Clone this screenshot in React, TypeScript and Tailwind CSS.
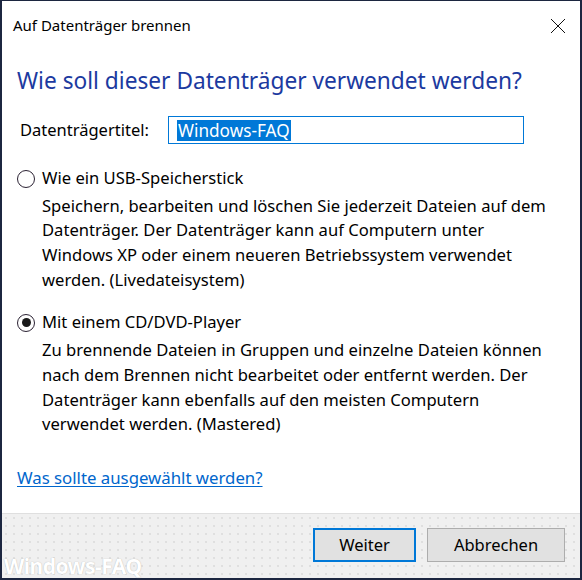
import { useState } from 'react';

const FONT = { fontFamily: '"Noto Sans", "Open Sans", Arial, sans-serif' };

function Radio({ checked }: { checked: boolean }) {
  return (
    <span className="mt-[4px] flex h-[18px] w-[18px] shrink-0 items-center justify-center rounded-full border border-[#2b2233] bg-white">
      {checked && <span className="h-[9px] w-[9px] rounded-full bg-[#1a1a1a]" />}
    </span>
  );
}

export default function App() {
  const [mode, setMode] = useState<'usb' | 'cd'>('cd');

  return (
    <div
      className="flex h-[580px] w-[582px] flex-col border-x-2 border-b-2 border-t border-[#1c2640] bg-white text-[#000000]"
      style={FONT}
    >
      <div className="flex h-[49px] items-center justify-between pl-[11px] pr-[14px]">
        <span className="text-[15px]">Auf Datenträger brennen</span>
        <svg width="16" height="16" viewBox="0 0 16 16" fill="none" stroke="#111" strokeWidth="1">
          <path d="M1 1 L15 15 M15 1 L1 15" />
        </svg>
      </div>

      <div className="flex flex-1 flex-col pl-[15px] pr-[10px]">
        <h1 className="mt-[17px] whitespace-nowrap text-[22.7px] leading-[28px] text-[#1c3aa0]">
          Wie soll dieser Datenträger verwendet werden?
        </h1>

        <div className="mt-[21px] flex items-center">
          <label className="w-[151px] pl-[3px] text-[16.5px]">Datenträgertitel:</label>
          <div className="flex h-[28px] w-[356px] items-center border border-[#0078d7] pl-[8px]">
            <span className="bg-[#0078d7] px-px text-[17.2px] leading-[21px] text-white">Windows-FAQ</span>
          </div>
        </div>

        <div className="mt-[22px] whitespace-nowrap text-[16.6px] leading-[24.7px]">
          <div className="flex cursor-default gap-[7px]" onClick={() => setMode('usb')}>
            <Radio checked={mode === 'usb'} />
            <div>
              <div>Wie ein USB-Speicherstick</div>
              <p className="mt-[3px]">
                Speichern, bearbeiten und löschen Sie jederzeit Dateien auf dem
                <br />
                Datenträger. Der Datenträger kann auf Computern unter
                <br />
                Windows XP oder einem neueren Betriebssystem verwendet
                <br />
                werden. (Livedateisystem)
              </p>
            </div>
          </div>

          <div className="mt-[17px] flex cursor-default gap-[7px]" onClick={() => setMode('cd')}>
            <Radio checked={mode === 'cd'} />
            <div>
              <div>Mit einem CD/DVD-Player</div>
              <p className="mt-[4px]">
                Zu brennende Dateien in Gruppen und einzelne Dateien können
                <br />
                nach dem Brennen nicht bearbeitet oder entfernt werden. Der
                <br />
                Datenträger kann ebenfalls auf den meisten Computern
                <br />
                verwendet werden. (Mastered)
              </p>
            </div>
          </div>
        </div>

        <a className="mt-[28px] w-fit text-[16.8px] text-[#0066cc] underline underline-offset-2" href="#">
          Was sollte ausgewählt werden?
        </a>
      </div>

      <div className="relative flex h-[65px] items-start justify-end gap-[11px] border-t border-[#dfdfdf] bg-[#f0f0f0] bg-[radial-gradient(circle,#dedede_0.7px,transparent_0.8px)] bg-[length:8px_8px] pr-[15px] pt-[14px]">
        <button className="h-[34px] w-[103px] border-2 border-[#0078d7] bg-[#e1e1e1] text-[16.5px]">Weiter</button>
        <button className="h-[34px] w-[138px] border border-[#adadad] bg-[#e1e1e1] text-[16.5px]">Abbrechen</button>
        <span className="absolute bottom-[-4px] left-[2px] text-[21px] font-bold tracking-tight text-white [text-shadow:0_0_1px_#aaa]">
          Windows-FAQ
        </span>
      </div>
    </div>
  );
}
